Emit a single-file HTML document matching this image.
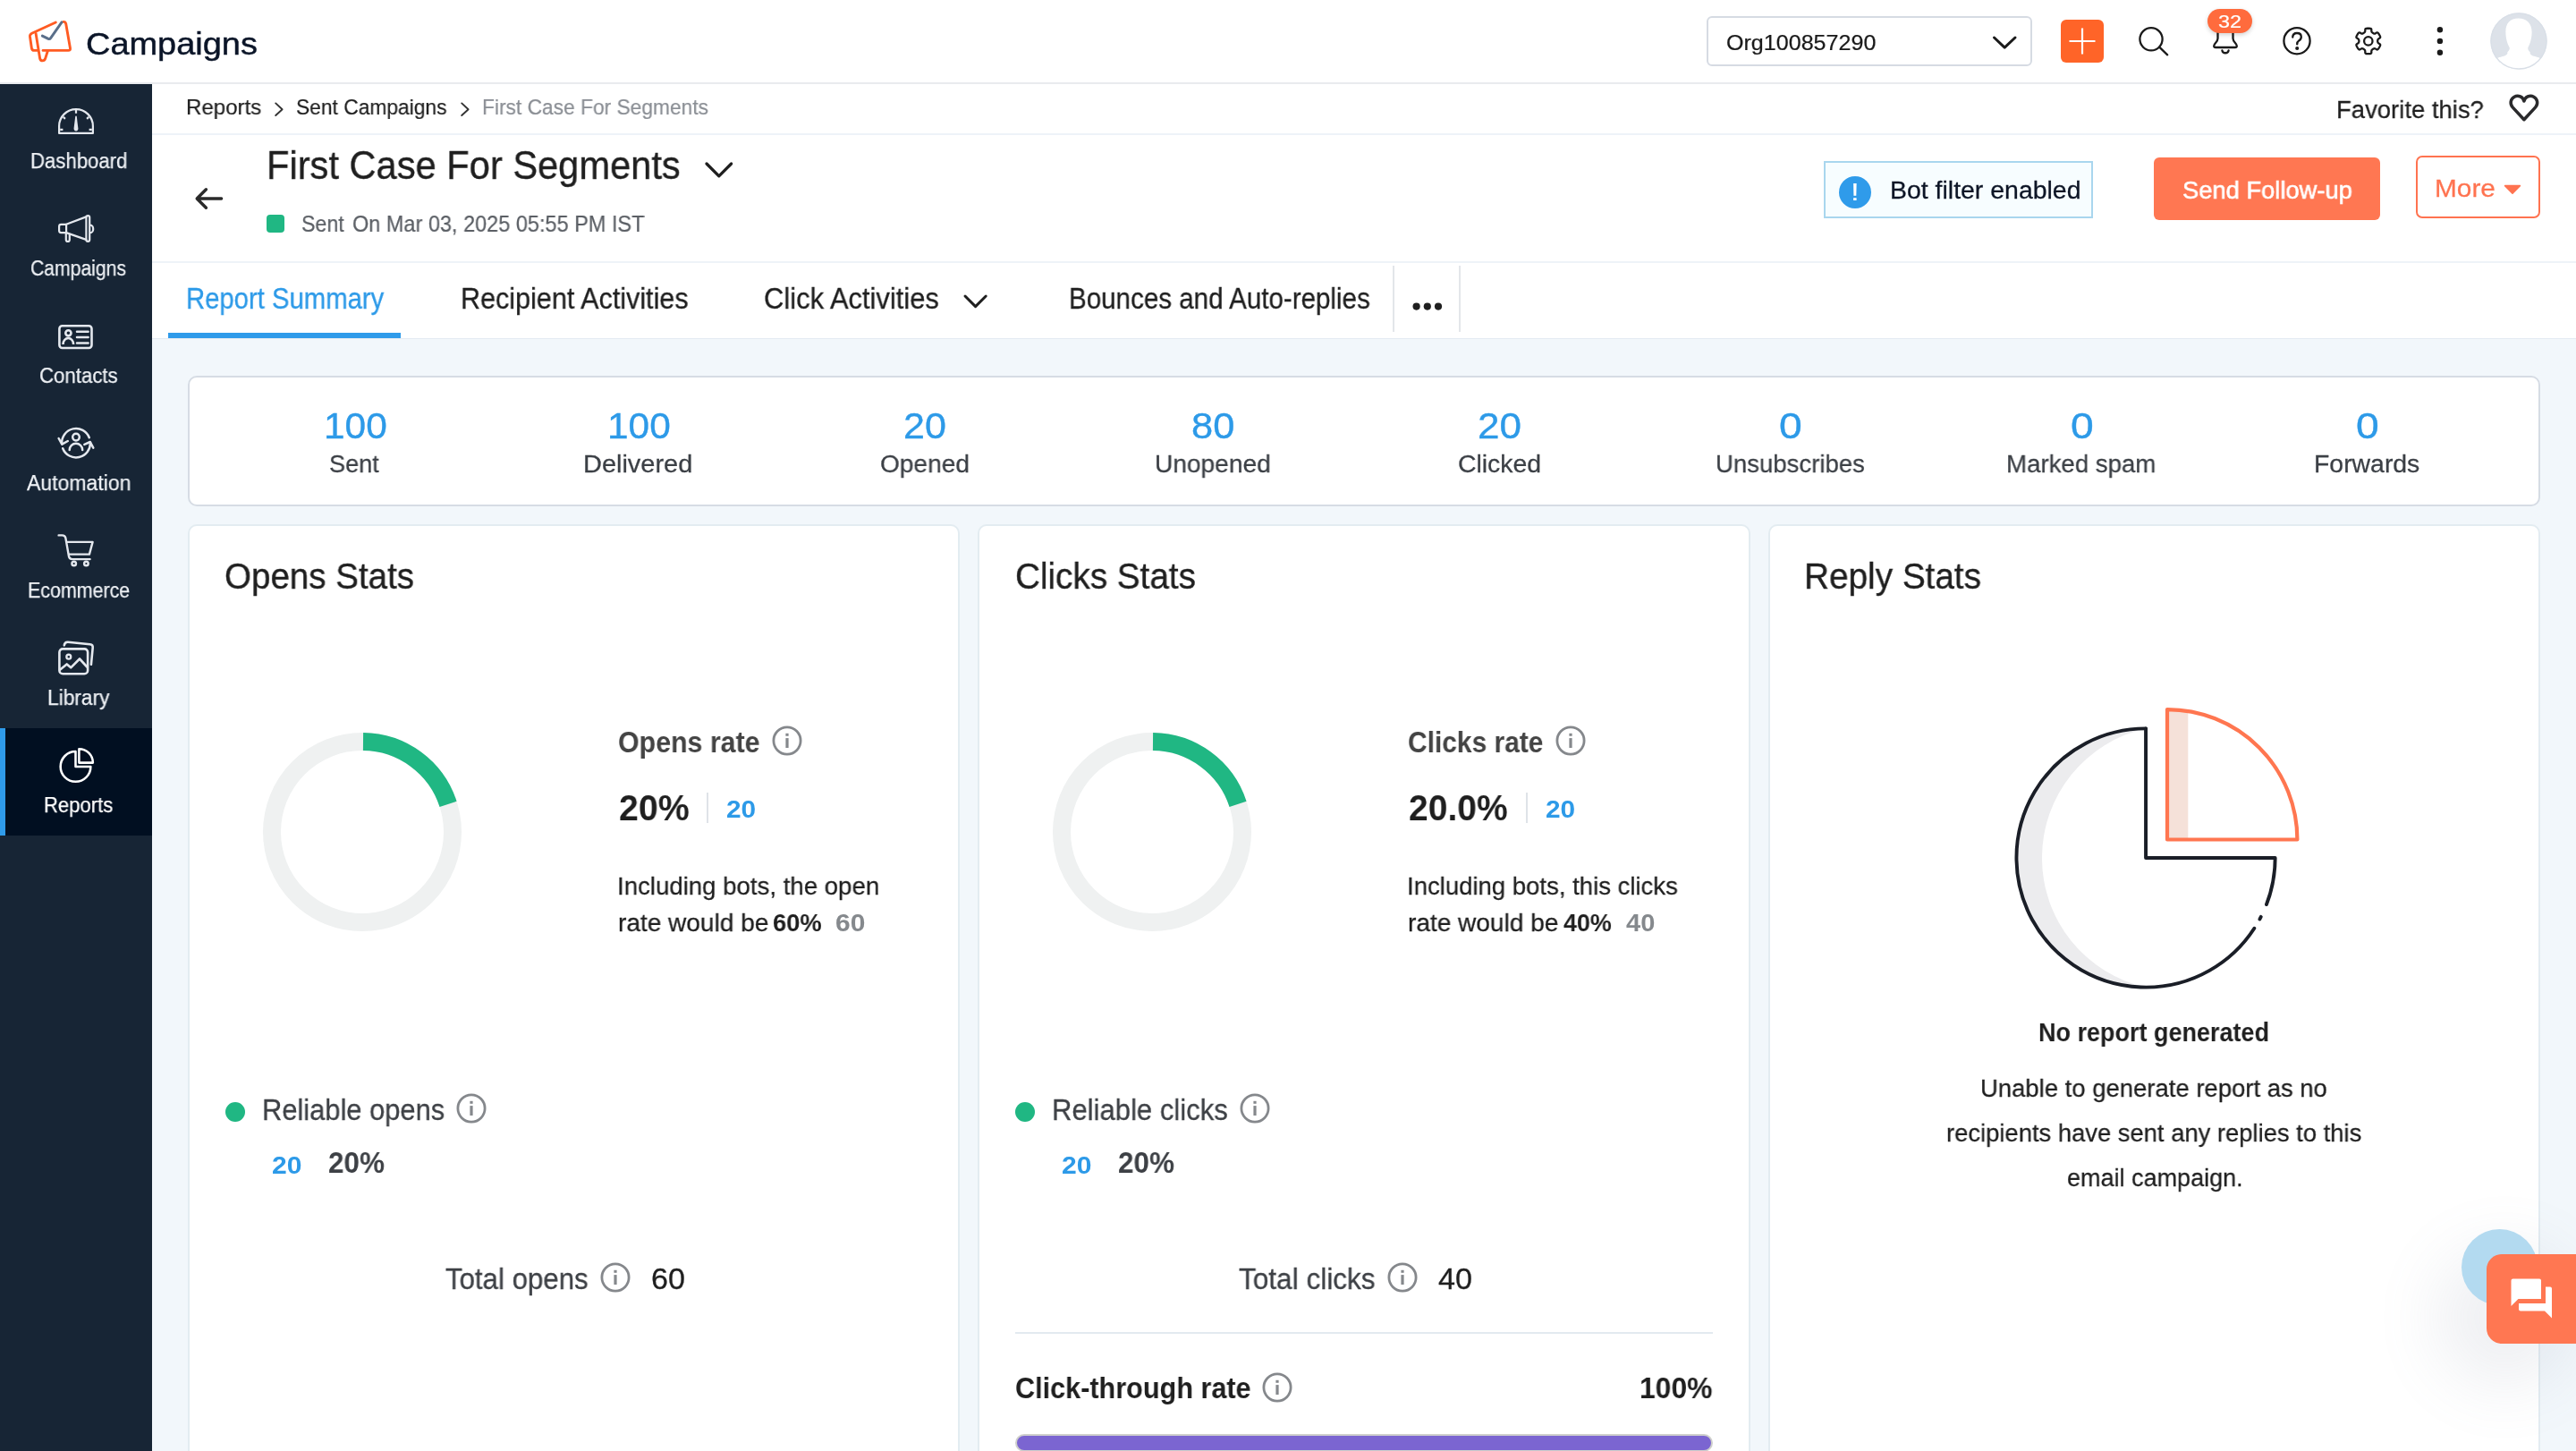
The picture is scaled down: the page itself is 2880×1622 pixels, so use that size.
<!DOCTYPE html>
<html lang="en"><head><meta charset="utf-8"><title>Campaigns - First Case For Segments</title>
<style>
*{box-sizing:border-box;margin:0;padding:0}
html,body{width:2880px;height:1622px;overflow:hidden;background:#f2f7fb;font-family:"Liberation Sans",sans-serif}
.abs,.t,svg{position:absolute}
.t{white-space:nowrap;transform-origin:0 0;display:block;will-change:transform}
header{position:absolute;left:0;top:0;width:2880px;height:94px;background:#fff;border-bottom:2px solid #e9ebee}
nav,main{position:absolute;left:0;top:0}
.crumbs{left:170px;top:94px;width:2710px;height:57px;background:#fff;border-bottom:2px solid #eef3f8}
.titlebar{left:170px;top:151px;width:2710px;height:143px;background:#fff;border-bottom:2px solid #eef3f8}
.tabs{left:170px;top:294px;width:2710px;height:85px;background:#fff;border-bottom:1px solid #e4ebf2}
.card{background:#fff;border:2px solid #e3ecf1;border-radius:10px}
.summary{left:210px;top:420px;width:2630px;height:146px;border-color:#d6dce4}
.vline{width:2px;background:#e3e6ea}
</style></head>
<body>
<header>
<svg style="left:0;top:0" width="120" height="92" viewBox="0 0 120 92" fill="none" stroke-linecap="round" stroke-linejoin="round">
<path d="M62.3 25 L35.6 37.2 Q33.2 38.4 33.5 41 L35.4 54 Q35.8 56.4 38.2 56.4 L41.9 56.4" stroke="#ff5b22" stroke-width="2.9"/>
<path d="M40.1 37.5 L44.6 65.2 Q45.1 67.9 47.6 67.9 Q49.8 67.9 50.6 65.6 L53.4 56.7" stroke="#ff5b22" stroke-width="2.9"/>
<path d="M48 56.4 L76.4 56.4 Q78.9 56.4 78.5 53.9 L73.7 26.6 Q73.2 24.2 70.8 24.4" stroke="#ff5b22" stroke-width="2.9"/>
<path d="M47.3 40.1 L54 43.4 Q55.6 44.1 56.6 42.6 L69 24.9" stroke="#5a6f8a" stroke-width="2.9"/>
</svg>
<span class="t" style="left:95.9px;top:28.1px;font-size:35.2px;line-height:42px;color:#0b1528;transform:scaleX(1.0781);-webkit-text-stroke:0.45px #0b1528">Campaigns</span>
<div class="abs" style="left:1908px;top:18px;width:364px;height:56px;border:2px solid #d6dbe3;border-radius:6px;background:#fff"></div>
<span class="t" style="left:1929.6px;top:32.5px;font-size:24.5px;line-height:29px;color:#1a1a1a;transform:scaleX(1.0238);-webkit-text-stroke:0.22px #1a1a1a">Org100857290</span>
<svg style="left:2224px;top:36px" width="34" height="24" viewBox="0 0 34 24" fill="none"><path d="M5.5 6 L17.2 17.2 L29 6" stroke="#1a1a1a" stroke-width="3" stroke-linecap="round" stroke-linejoin="round"/></svg>
<div class="abs" style="left:2304px;top:22px;width:48px;height:48px;border-radius:6px;background:#ff6428"></div>
<svg style="left:2304px;top:22px" width="48" height="48" viewBox="0 0 48 48"><path d="M9.5 24 H38.5 M24 9.5 V38.5" stroke="#fff" stroke-width="2.2" fill="none"/></svg>
<svg style="left:2386px;top:26px" width="44" height="44" viewBox="0 0 44 44" fill="none" stroke="#1a1a1a" stroke-width="2.3" stroke-linecap="round"><circle cx="19" cy="17.8" r="12.6"/><path d="M28.2 26.6 L37.2 35.3"/></svg>
<svg style="left:2466px;top:26px" width="44" height="44" viewBox="0 0 44 44" fill="none" stroke="#1a1a1a" stroke-width="2.3" stroke-linecap="round" stroke-linejoin="round"><path d="M13.5 8 V17 C13.5 21 9.2 22.5 9.2 25.2 Q9.2 27 11.2 27 H32.8 Q34.8 27 34.8 25.2 C34.8 22.5 30.5 21 30.5 17 V8"/><path d="M18.4 30.4 A3.7 3.7 0 0 0 25.6 30.4"/></svg>
<div class="abs" style="left:2468px;top:10px;width:50px;height:27px;border-radius:14px;background:#ff6b3d;box-shadow:0 2px 5px rgba(0,0,0,.18)"></div>
<span class="t" style="left:2479.9px;top:11.2px;font-size:21.1px;line-height:25px;color:#fff;transform:scaleX(1.1097);-webkit-text-stroke:0.19px #fff">32</span>
<svg style="left:2546px;top:24px" width="44" height="44" viewBox="0 0 44 44" fill="none" stroke="#1a1a1a" stroke-width="2.3" stroke-linecap="round"><circle cx="22" cy="21.7" r="14.6"/><path d="M17.2 17.6 Q17.4 13 22 13 Q26.8 13 26.8 17.2 Q26.8 19.8 24.2 21.4 Q22.2 22.7 22.2 25.4"/><circle cx="22.2" cy="30" r="0.9" fill="#1a1a1a"/></svg>
<svg style="left:2626px;top:24px" width="44" height="44" viewBox="0 0 44 44" fill="none" stroke="#1a1a1a" stroke-width="2.3" stroke-linejoin="round"><path d="M17.16 12.57 Q18.35 11.88 18.32 10.47 L18.30 9.14 Q18.27 7.73 20.67 7.73 L22.93 7.73 Q25.33 7.73 25.30 9.14 L25.28 10.47 Q25.25 11.88 26.44 12.57 L27.56 13.21 Q28.75 13.90 29.96 13.17 L31.10 12.49 Q32.30 11.76 33.50 13.84 L34.63 15.80 Q35.83 17.88 34.60 18.56 L33.44 19.20 Q32.21 19.88 32.21 21.25 L32.21 22.55 Q32.21 23.92 33.44 24.60 L34.60 25.24 Q35.83 25.92 34.63 28.00 L33.50 29.96 Q32.30 32.04 31.10 31.31 L29.96 30.63 Q28.75 29.90 27.56 30.59 L26.44 31.23 Q25.25 31.92 25.28 33.33 L25.30 34.66 Q25.33 36.07 22.93 36.07 L20.67 36.07 Q18.27 36.07 18.30 34.66 L18.32 33.33 Q18.35 31.92 17.16 31.23 L16.04 30.59 Q14.85 29.90 13.64 30.63 L12.50 31.31 Q11.30 32.04 10.10 29.96 L8.97 28.00 Q7.77 25.92 9.00 25.24 L10.16 24.60 Q11.39 23.92 11.39 22.55 L11.39 21.25 Q11.39 19.88 10.16 19.20 L9.00 18.56 Q7.77 17.88 8.97 15.80 L10.10 13.84 Q11.30 11.76 12.50 12.49 L13.64 13.17 Q14.85 13.90 16.04 13.21 Z"/><circle cx="21.8" cy="21.9" r="4.7"/></svg>
<svg style="left:2716px;top:24px" width="24" height="44" viewBox="0 0 24 44" fill="#1a1a1a"><circle cx="11.9" cy="9.2" r="3.2"/><circle cx="11.9" cy="21.9" r="3.2"/><circle cx="11.9" cy="34.7" r="3.2"/></svg>
<svg style="left:2784px;top:14px" width="64" height="64" viewBox="0 0 64 64"><defs><clipPath id="av"><circle cx="32" cy="32" r="31.4"/></clipPath></defs><circle cx="32" cy="32" r="31.6" fill="#dde2e9"/><g clip-path="url(#av)" fill="#fff"><path d="M31.5 6.6 C41 6.6 47 12.6 46.6 22.6 C46.4 30 44.4 35.6 42.4 39 C41.6 41.2 43.4 43 44.8 44.6 C43.8 46.4 46.4 48 50 49 C53.4 50 55.6 50.6 57 51.6 L57 64 L7 64 L7 51.6 C8.4 50.6 10.6 50 14 49 C17.6 48 20.2 46.4 19.2 44.6 C20.6 43 22.4 41.2 21.6 39 C19.6 35.6 17.6 30 17.4 22.6 C17 12.6 22 6.6 31.5 6.6 Z"/></g><circle cx="32" cy="32" r="31" fill="none" stroke="#d9dfe7" stroke-width="1.4"/></svg>
</header>
<nav class="abs" style="left:0;top:0;width:170px;height:1622px;background:linear-gradient(#172535,#172535) 0 94px/170px 1528px no-repeat">
<div class="abs" style="left:0;top:814px;width:170px;height:120px;background:#010f21;border-left:6px solid #2f9bea"></div>
<svg style="left:55px;top:116px" width="60" height="40" viewBox="55 116 60 40" fill="none" stroke="#e4e8ee" stroke-width="2.4" stroke-linecap="round" stroke-linejoin="round"><path d="M66.1 148.9 V141 A18.9 18.9 0 0 1 103.9 141 V148.9 Z" stroke-width="2.2"/><path d="M84.3 129.8 H85.7 L87.4 143.6 Q87.5 146.4 85 146.4 Q82.5 146.4 82.6 143.6 Z" fill="#e4e8ee" stroke="none"/><path d="M85 122.6 V126.7 M67.2 144.8 H70.4 M102.8 144.8 H99.6 M70.8 130.8 L72.9 132.9 M99.2 130.8 L97.1 132.9" stroke-width="2.2" stroke-linecap="butt"/></svg>
<svg style="left:55px;top:235px" width="60" height="42" viewBox="55 235 60 42" fill="none" stroke="#e4e8ee" stroke-width="2.2" stroke-linecap="round" stroke-linejoin="round"><path d="M74.1 250.8 H68.4 Q66.1 250.8 66.1 253.1 V257.8 Q66.1 260.1 68.4 260.1 H74.1 Z"/><path d="M74.1 250.8 L96.3 242.4 M74.1 260.1 L96.3 267.9"/><rect x="96.4" y="241.1" width="3.8" height="28.8" rx="1.9"/><path d="M101 251.6 A3.2 4.3 0 0 1 101 260.2"/><path d="M73.8 260.4 V267.9 A2 2 0 0 0 77.8 267.9 V261.8"/></svg>
<svg style="left:55px;top:358px" width="60" height="38" viewBox="55 358 60 38" fill="none" stroke="#e4e8ee" stroke-width="2.6" stroke-linecap="round" stroke-linejoin="round"><rect x="66.4" y="364.3" width="36.1" height="24.7" rx="3.2"/><circle cx="76.4" cy="372.3" r="3.1"/><path d="M70.5 384.9 A5.8 6.9 0 0 1 82.1 384.9" stroke-linecap="butt"/><path d="M86 370.8 H98.6 M86 377.1 H98.6 M86 383.4 H98.6" stroke-width="2.5"/></svg>
<svg style="left:55px;top:472px" width="60" height="46" viewBox="55 472 60 46" fill="none" stroke="#e4e8ee" stroke-width="2.5" stroke-linecap="round" stroke-linejoin="round"><path d="M99.8 489.2 A15.9 15.9 0 0 0 69.1 496"/><path d="M70.2 501.2 A15.9 15.9 0 0 0 100.9 494.4"/><path d="M65.6 490 L69.3 496.6 L75.8 493"/><path d="M94.3 496.9 L100.8 494 L104.3 500.7"/><circle cx="85" cy="488.6" r="3.8"/><path d="M77.7 503.1 A7.25 7.25 0 0 1 92.2 503.1"/></svg>
<svg style="left:55px;top:592px" width="60" height="46" viewBox="55 592 60 46" fill="none" stroke="#e4e8ee" stroke-width="2.4" stroke-linecap="round" stroke-linejoin="round"><path d="M65.6 598.4 H69.4 Q72.7 598.4 73.4 601.6 L77 622 Q77.6 625.1 80.8 625.1 H100.6"/><path d="M75 605.9 H103.6 L99.9 619.6 H77.2"/><circle cx="82.7" cy="630" r="2.3"/><circle cx="96.4" cy="630" r="2.3"/></svg>
<svg style="left:55px;top:711px" width="60" height="48" viewBox="55 711 60 48" fill="none" stroke="#e4e8ee" stroke-width="2.6" stroke-linecap="round" stroke-linejoin="round"><rect x="66.4" y="725.4" width="31.7" height="27.9" rx="3.8"/><path d="M71.8 721.4 Q72.3 717.4 76 717.7 L100.6 720.3 Q104.1 720.7 103.7 724.2 L101.9 742.8"/><circle cx="76.8" cy="734.2" r="2.45" stroke-width="2.3"/><path d="M67.3 748.6 L74.7 742.4 L79.2 746.3 L89 736.5 L97.3 745.5"/></svg>
<svg style="left:55px;top:830px" width="60" height="50" viewBox="55 830 60 50" fill="none" stroke="#fff" stroke-width="2.55" stroke-linecap="round" stroke-linejoin="round"><path d="M84.5 840.05 A16.85 16.85 0 1 0 101.35 856.9 H84.5 Z"/><path d="M88.4 837.15 A15.45 15.45 0 0 1 103.85 852.6 H88.4 Z"/></svg>
<span class="t" style="left:33.7px;top:165.7px;font-size:23.3px;line-height:28px;color:#eef1f5;transform:scaleX(0.9510);-webkit-text-stroke:0.25px #eef1f5">Dashboard</span>
<span class="t" style="left:34.4px;top:285.9px;font-size:23.3px;line-height:28px;color:#eef1f5;transform:scaleX(0.9080);-webkit-text-stroke:0.25px #eef1f5">Campaigns</span>
<span class="t" style="left:43.9px;top:405.6px;font-size:23.3px;line-height:28px;color:#eef1f5;transform:scaleX(0.9534);-webkit-text-stroke:0.25px #eef1f5">Contacts</span>
<span class="t" style="left:30.3px;top:525.7px;font-size:23.3px;line-height:28px;color:#eef1f5;transform:scaleX(0.9873);-webkit-text-stroke:0.25px #eef1f5">Automation</span>
<span class="t" style="left:30.8px;top:645.8px;font-size:23.3px;line-height:28px;color:#eef1f5;transform:scaleX(0.9185);-webkit-text-stroke:0.25px #eef1f5">Ecommerce</span>
<span class="t" style="left:52.5px;top:765.6px;font-size:23.3px;line-height:28px;color:#eef1f5;transform:scaleX(0.9758);-webkit-text-stroke:0.25px #eef1f5">Library</span>
<span class="t" style="left:49.2px;top:885.9px;font-size:23.3px;line-height:28px;color:#fff;transform:scaleX(0.9464);-webkit-text-stroke:0.25px #fff">Reports</span>
</nav>
<main>
<div class="abs crumbs"></div>
<span class="t" style="left:207.5px;top:105.4px;font-size:24.5px;line-height:29px;color:#1f1f1f;transform:scaleX(0.9820);-webkit-text-stroke:0.22px #1f1f1f">Reports</span>
<span class="t" style="left:331.4px;top:105.4px;font-size:24.5px;line-height:29px;color:#1f1f1f;transform:scaleX(0.9299);-webkit-text-stroke:0.22px #1f1f1f">Sent Campaigns</span>
<span class="t" style="left:539.4px;top:105.4px;font-size:24.5px;line-height:29px;color:#8a8e94;transform:scaleX(0.9291);-webkit-text-stroke:0.22px #8a8e94">First Case For Segments</span>
<svg style="left:305px;top:112px" width="16" height="20" viewBox="0 0 16 20" fill="none"><path d="M3.2 3.4 L10.6 10.2 L3.2 17" stroke="#333" stroke-width="1.9" stroke-linecap="round" stroke-linejoin="round"/></svg>
<svg style="left:513px;top:112px" width="16" height="20" viewBox="0 0 16 20" fill="none"><path d="M3.2 3.4 L10.6 10.2 L3.2 17" stroke="#333" stroke-width="1.9" stroke-linecap="round" stroke-linejoin="round"/></svg>
<span class="t" style="left:2611.6px;top:105.0px;font-size:28.4px;line-height:34px;color:#1f1f1f;transform:scaleX(0.9677);-webkit-text-stroke:0.26px #1f1f1f">Favorite this?</span>
<svg style="left:2800px;top:100px" width="44" height="40" viewBox="0 0 44 40" fill="none"><path d="M21.90 33.70 L9.10 19.90 A7.5 7.5 0 1 1 21.90 13.08 A7.5 7.5 0 1 1 34.70 19.90 Z" stroke="#2a2a2c" stroke-width="3.5" stroke-linejoin="round"/></svg>
<div class="abs titlebar"></div>
<svg style="left:212px;top:204px" width="44" height="36" viewBox="0 0 44 36" fill="none"><path d="M35.6 18 H9 M18.4 7.8 L8.2 18 L18.4 28.2" stroke="#2a2a2a" stroke-width="3.4" stroke-linecap="round" stroke-linejoin="round"/></svg>
<span class="t" style="left:298.0px;top:158.1px;font-size:44.7px;line-height:54px;color:#1f1f1f;transform:scaleX(0.9317);-webkit-text-stroke:0.4px #1f1f1f">First Case For Segments</span>
<svg style="left:782px;top:174px" width="44" height="32" viewBox="0 0 44 32" fill="none"><path d="M8 9 L21.8 22.8 L35.6 9" stroke="#1f1f1f" stroke-width="3.3" stroke-linecap="round" stroke-linejoin="round"/></svg>
<div class="abs" style="left:298px;top:240px;width:20px;height:20px;border-radius:4px;background:#20b783"></div>
<span class="t" style="left:337.4px;top:234.8px;font-size:24.9px;line-height:30px;color:#5c6066;transform:scaleX(0.9322);-webkit-text-stroke:0.22px #5c6066">Sent</span>
<span class="t" style="left:393.6px;top:234.8px;font-size:24.9px;line-height:30px;color:#5c6066;transform:scaleX(0.9438);-webkit-text-stroke:0.22px #5c6066">On Mar 03, 2025 05:55 PM IST</span>
<div class="abs" style="left:2039px;top:180px;width:301px;height:64px;border:2px solid #a9d6ee;background:#f7fdff"></div>
<div class="abs" style="left:2055.5px;top:196.5px;width:36px;height:36px;border-radius:50%;background:#2f9bea"></div>
<span class="t" style="left:2068.7px;top:198.3px;font-size:27.8px;line-height:33px;color:#fff;transform:scaleX(1.2544);-webkit-text-stroke:0.1px #fff">!</span>
<span class="t" style="left:2112.7px;top:194.6px;font-size:28.4px;line-height:34px;color:#0d1526;transform:scaleX(1.0019);-webkit-text-stroke:0.26px #0d1526">Bot filter enabled</span>
<div class="abs" style="left:2408px;top:176px;width:253px;height:70px;border-radius:6px;background:#ff7752"></div>
<span class="t" style="left:2439.5px;top:194.9px;font-size:28.4px;line-height:34px;color:#fff;transform:scaleX(0.9621);-webkit-text-stroke:0.6px #fff">Send Follow-up</span>
<div class="abs" style="left:2701px;top:174px;width:139px;height:70px;border:2px solid #ff7350;border-radius:7px;background:#fff"></div>
<span class="t" style="left:2722.4px;top:192.9px;font-size:28.4px;line-height:34px;color:#ff7350;transform:scaleX(1.0506);-webkit-text-stroke:0.26px #ff7350">More</span>
<svg style="left:2796px;top:203.2px" width="26" height="18" viewBox="0 0 26 18"><path d="M4.6 4.6 H21.4 L13 13.2 Z" fill="#ff7350" stroke="#ff7350" stroke-width="1.6" stroke-linejoin="round"/></svg>
<div class="abs tabs"></div>
<span class="t" style="left:207.8px;top:315.4px;font-size:32.5px;line-height:39px;color:#2d9ae8;transform:scaleX(0.9008);-webkit-text-stroke:0.29px #2d9ae8">Report Summary</span>
<div class="abs" style="left:188px;top:372px;width:260px;height:6px;background:#2f9bea"></div>
<span class="t" style="left:514.8px;top:315.4px;font-size:32.5px;line-height:39px;color:#1f1f1f;transform:scaleX(0.9396);-webkit-text-stroke:0.29px #1f1f1f">Recipient Activities</span>
<span class="t" style="left:854.4px;top:315.4px;font-size:32.5px;line-height:39px;color:#1f1f1f;transform:scaleX(0.9516);-webkit-text-stroke:0.29px #1f1f1f">Click Activities</span>
<svg style="left:1072px;top:322px" width="38" height="30" viewBox="0 0 38 30" fill="none"><path d="M7 9 L18.6 20.6 L30.2 9" stroke="#1f1f1f" stroke-width="3" stroke-linecap="round" stroke-linejoin="round"/></svg>
<span class="t" style="left:1195.1px;top:315.4px;font-size:32.5px;line-height:39px;color:#1f1f1f;transform:scaleX(0.9092);-webkit-text-stroke:0.29px #1f1f1f">Bounces and Auto-replies</span>
<div class="abs vline" style="left:1557px;top:297px;height:74px"></div>
<div class="abs vline" style="left:1631px;top:297px;height:74px"></div>
<svg style="left:1574.5px;top:332.7px" width="42" height="20" viewBox="0 0 42 20" fill="#1f1f1f"><circle cx="8.6" cy="9.6" r="4.1"/><circle cx="20.8" cy="9.6" r="4.1"/><circle cx="33" cy="9.6" r="4.1"/></svg>
<section class="abs card summary"></section>
<span class="t" style="left:361.8px;top:451.8px;font-size:40.8px;line-height:49px;color:#2d9ae8;transform:scaleX(1.0403);-webkit-text-stroke:0.37px #2d9ae8">100</span>
<span class="t" style="left:368.4px;top:501.2px;font-size:28.4px;line-height:34px;color:#3c4046;transform:scaleX(0.9542);-webkit-text-stroke:0.26px #3c4046">Sent</span>
<span class="t" style="left:678.7px;top:451.8px;font-size:40.8px;line-height:49px;color:#2d9ae8;transform:scaleX(1.0387);-webkit-text-stroke:0.37px #2d9ae8">100</span>
<span class="t" style="left:652.4px;top:501.2px;font-size:28.4px;line-height:34px;color:#3c4046;transform:scaleX(1.0192);-webkit-text-stroke:0.26px #3c4046">Delivered</span>
<span class="t" style="left:1010.2px;top:451.8px;font-size:40.8px;line-height:49px;color:#2d9ae8;transform:scaleX(1.0547);-webkit-text-stroke:0.37px #2d9ae8">20</span>
<span class="t" style="left:984.3px;top:501.2px;font-size:28.4px;line-height:34px;color:#3c4046;transform:scaleX(0.9890);-webkit-text-stroke:0.26px #3c4046">Opened</span>
<span class="t" style="left:1331.9px;top:451.8px;font-size:40.8px;line-height:49px;color:#2d9ae8;transform:scaleX(1.0637);-webkit-text-stroke:0.37px #2d9ae8">80</span>
<span class="t" style="left:1290.6px;top:501.2px;font-size:28.4px;line-height:34px;color:#3c4046;transform:scaleX(0.9901);-webkit-text-stroke:0.26px #3c4046">Unopened</span>
<span class="t" style="left:1651.8px;top:451.8px;font-size:40.8px;line-height:49px;color:#2d9ae8;transform:scaleX(1.0787);-webkit-text-stroke:0.37px #2d9ae8">20</span>
<span class="t" style="left:1629.6px;top:501.2px;font-size:28.4px;line-height:34px;color:#3c4046;transform:scaleX(0.9957);-webkit-text-stroke:0.26px #3c4046">Clicked</span>
<span class="t" style="left:1988.5px;top:451.8px;font-size:40.8px;line-height:49px;color:#2d9ae8;transform:scaleX(1.1336);-webkit-text-stroke:0.37px #2d9ae8">0</span>
<span class="t" style="left:1917.5px;top:501.2px;font-size:28.4px;line-height:34px;color:#3c4046;transform:scaleX(0.9703);-webkit-text-stroke:0.26px #3c4046">Unsubscribes</span>
<span class="t" style="left:2314.6px;top:451.8px;font-size:40.8px;line-height:49px;color:#2d9ae8;transform:scaleX(1.1336);-webkit-text-stroke:0.37px #2d9ae8">0</span>
<span class="t" style="left:2243.4px;top:501.2px;font-size:28.4px;line-height:34px;color:#3c4046;transform:scaleX(0.9731);-webkit-text-stroke:0.26px #3c4046">Marked spam</span>
<span class="t" style="left:2634.2px;top:451.8px;font-size:40.8px;line-height:49px;color:#2d9ae8;transform:scaleX(1.1336);-webkit-text-stroke:0.37px #2d9ae8">0</span>
<span class="t" style="left:2587.3px;top:501.2px;font-size:28.4px;line-height:34px;color:#3c4046;transform:scaleX(0.9966);-webkit-text-stroke:0.26px #3c4046">Forwards</span>
<section class="abs card" style="left:210px;top:586px;width:863px;height:1060px"></section>
<section class="abs card" style="left:1093px;top:586px;width:864px;height:1060px"></section>
<section class="abs card" style="left:1977px;top:586px;width:863px;height:1060px"></section>
<span class="t" style="left:251.3px;top:619.7px;font-size:40.8px;line-height:49px;color:#1f1f1f;transform:scaleX(0.9447);-webkit-text-stroke:0.37px #1f1f1f">Opens Stats</span>
<span class="t" style="left:1134.7px;top:619.7px;font-size:40.8px;line-height:49px;color:#1f1f1f;transform:scaleX(0.9475);-webkit-text-stroke:0.37px #1f1f1f">Clicks Stats</span>
<span class="t" style="left:2016.9px;top:619.7px;font-size:40.8px;line-height:49px;color:#1f1f1f;transform:scaleX(0.9490);-webkit-text-stroke:0.37px #1f1f1f">Reply Stats</span>
<svg style="left:290px;top:814.5px" width="230" height="230" viewBox="290 814.5 230 230" fill="none"><circle cx="405" cy="929.5" r="101" stroke="#eff1f1" stroke-width="20"/><path d="M406 828.5 A101 101 0 0 1 501.06 898.29" stroke="#20b783" stroke-width="20"/></svg>
<span class="t" style="left:691.4px;top:811.2px;font-size:32.5px;line-height:39px;color:#444;transform:scaleX(0.9332);font-weight:700">Opens rate</span>
<svg style="left:861.6px;top:810.2px" width="36" height="36" viewBox="-18 -18 36 36" fill="none"><circle cx="0" cy="0" r="15.1" stroke="#85888c" stroke-width="2.8"/><rect x="-1.6" y="-8.2" width="3.2" height="3" fill="#85888c"/><rect x="-1.6" y="-2.9" width="3.2" height="10.9" fill="#85888c"/></svg>
<span class="t" style="left:691.5px;top:878.9px;font-size:40.8px;line-height:49px;color:#1f1f1f;transform:scaleX(0.9628);font-weight:700">20%</span>
<div class="abs" style="left:790px;top:886px;width:2px;height:34px;background:#dfe3e8"></div>
<span class="t" style="left:812.0px;top:886.8px;font-size:28.4px;line-height:34px;color:#2d9ae8;transform:scaleX(1.0496);font-weight:700">20</span>
<span class="t" style="left:690.3px;top:972.8px;font-size:28.4px;line-height:34px;color:#1f1f1f;transform:scaleX(0.9724);-webkit-text-stroke:0.26px #1f1f1f">Including bots, the open</span>
<span class="t" style="left:691.0px;top:1013.7px;font-size:28.4px;line-height:34px;color:#1f1f1f;transform:scaleX(0.9873);-webkit-text-stroke:0.26px #1f1f1f">rate would be</span>
<span class="t" style="left:863.9px;top:1013.7px;font-size:28.4px;line-height:34px;color:#1f1f1f;transform:scaleX(0.9625);font-weight:700">60%</span>
<span class="t" style="left:933.7px;top:1013.7px;font-size:28.4px;line-height:34px;color:#85898d;transform:scaleX(1.0555);font-weight:700">60</span>
<div class="abs" style="left:251.8px;top:1231.8px;width:22.4px;height:22.4px;border-radius:50%;background:#20b783"></div>
<span class="t" style="left:293.1px;top:1221.9px;font-size:32.5px;line-height:39px;color:#3d4045;transform:scaleX(0.9496);-webkit-text-stroke:0.29px #3d4045">Reliable opens</span>
<svg style="left:508.79999999999995px;top:1221.4px" width="36" height="36" viewBox="-18 -18 36 36" fill="none"><circle cx="0" cy="0" r="15.1" stroke="#85888c" stroke-width="2.8"/><rect x="-1.6" y="-8.2" width="3.2" height="3" fill="#85888c"/><rect x="-1.6" y="-2.9" width="3.2" height="10.9" fill="#85888c"/></svg>
<span class="t" style="left:303.9px;top:1284.9px;font-size:28.4px;line-height:34px;color:#2d9ae8;transform:scaleX(1.0597);font-weight:700">20</span>
<span class="t" style="left:366.6px;top:1280.9px;font-size:32.5px;line-height:39px;color:#3d4045;transform:scaleX(0.9666);font-weight:700">20%</span>
<span class="t" style="left:498.1px;top:1410.5px;font-size:32.5px;line-height:39px;color:#3d4045;transform:scaleX(0.9602);-webkit-text-stroke:0.29px #3d4045">Total opens</span>
<svg style="left:670px;top:1410.4px" width="36" height="36" viewBox="-18 -18 36 36" fill="none"><circle cx="0" cy="0" r="15.1" stroke="#85888c" stroke-width="2.8"/><rect x="-1.6" y="-8.2" width="3.2" height="3" fill="#85888c"/><rect x="-1.6" y="-2.9" width="3.2" height="10.9" fill="#85888c"/></svg>
<span class="t" style="left:727.6px;top:1410.5px;font-size:32.5px;line-height:39px;color:#1f1f1f;transform:scaleX(1.0502);-webkit-text-stroke:0.29px #1f1f1f">60</span>
<svg style="left:1173px;top:814.5px" width="230" height="230" viewBox="1173 814.5 230 230" fill="none"><circle cx="1288" cy="929.5" r="101" stroke="#eff1f1" stroke-width="20"/><path d="M1289 828.5 A101 101 0 0 1 1384.06 898.29" stroke="#20b783" stroke-width="20"/></svg>
<span class="t" style="left:1574.4px;top:811.2px;font-size:32.5px;line-height:39px;color:#444;transform:scaleX(0.9209);font-weight:700">Clicks rate</span>
<svg style="left:1737.5px;top:810.2px" width="36" height="36" viewBox="-18 -18 36 36" fill="none"><circle cx="0" cy="0" r="15.1" stroke="#85888c" stroke-width="2.8"/><rect x="-1.6" y="-8.2" width="3.2" height="3" fill="#85888c"/><rect x="-1.6" y="-2.9" width="3.2" height="10.9" fill="#85888c"/></svg>
<span class="t" style="left:1574.5px;top:878.9px;font-size:40.8px;line-height:49px;color:#1f1f1f;transform:scaleX(0.9557);font-weight:700">20.0%</span>
<div class="abs" style="left:1706px;top:886px;width:2px;height:34px;background:#dfe3e8"></div>
<span class="t" style="left:1727.8px;top:886.8px;font-size:28.4px;line-height:34px;color:#2d9ae8;transform:scaleX(1.0496);font-weight:700">20</span>
<span class="t" style="left:1573.3px;top:972.8px;font-size:28.4px;line-height:34px;color:#1f1f1f;transform:scaleX(0.9693);-webkit-text-stroke:0.26px #1f1f1f">Including bots, this clicks</span>
<span class="t" style="left:1574.0px;top:1013.7px;font-size:28.4px;line-height:34px;color:#1f1f1f;transform:scaleX(0.9873);-webkit-text-stroke:0.26px #1f1f1f">rate would be</span>
<span class="t" style="left:1747.6px;top:1013.7px;font-size:28.4px;line-height:34px;color:#1f1f1f;transform:scaleX(0.9473);font-weight:700">40%</span>
<span class="t" style="left:1817.5px;top:1013.7px;font-size:28.4px;line-height:34px;color:#85898d;transform:scaleX(1.0222);font-weight:700">40</span>
<div class="abs" style="left:1134.8px;top:1231.8px;width:22.4px;height:22.4px;border-radius:50%;background:#20b783"></div>
<span class="t" style="left:1176.1px;top:1221.9px;font-size:32.5px;line-height:39px;color:#3d4045;transform:scaleX(0.9552);-webkit-text-stroke:0.29px #3d4045">Reliable clicks</span>
<svg style="left:1385.4px;top:1221.4px" width="36" height="36" viewBox="-18 -18 36 36" fill="none"><circle cx="0" cy="0" r="15.1" stroke="#85888c" stroke-width="2.8"/><rect x="-1.6" y="-8.2" width="3.2" height="3" fill="#85888c"/><rect x="-1.6" y="-2.9" width="3.2" height="10.9" fill="#85888c"/></svg>
<span class="t" style="left:1186.9px;top:1284.9px;font-size:28.4px;line-height:34px;color:#2d9ae8;transform:scaleX(1.0597);font-weight:700">20</span>
<span class="t" style="left:1249.6px;top:1280.9px;font-size:32.5px;line-height:39px;color:#3d4045;transform:scaleX(0.9666);font-weight:700">20%</span>
<span class="t" style="left:1385.1px;top:1410.5px;font-size:32.5px;line-height:39px;color:#3d4045;transform:scaleX(0.9714);-webkit-text-stroke:0.29px #3d4045">Total clicks</span>
<svg style="left:1550px;top:1410.4px" width="36" height="36" viewBox="-18 -18 36 36" fill="none"><circle cx="0" cy="0" r="15.1" stroke="#85888c" stroke-width="2.8"/><rect x="-1.6" y="-8.2" width="3.2" height="3" fill="#85888c"/><rect x="-1.6" y="-2.9" width="3.2" height="10.9" fill="#85888c"/></svg>
<span class="t" style="left:1607.5px;top:1410.5px;font-size:32.5px;line-height:39px;color:#1f1f1f;transform:scaleX(1.0520);-webkit-text-stroke:0.29px #1f1f1f">40</span>
<div class="abs" style="left:1135px;top:1489px;width:780px;height:2px;background:#e3eaf0"></div>
<span class="t" style="left:1134.7px;top:1532.8px;font-size:32.5px;line-height:39px;color:#1f1f1f;transform:scaleX(0.9417);font-weight:700">Click-through rate</span>
<svg style="left:1410.2px;top:1532.5px" width="36" height="36" viewBox="-18 -18 36 36" fill="none"><circle cx="0" cy="0" r="15.1" stroke="#85888c" stroke-width="2.8"/><rect x="-1.6" y="-8.2" width="3.2" height="3" fill="#85888c"/><rect x="-1.6" y="-2.9" width="3.2" height="10.9" fill="#85888c"/></svg>
<span class="t" style="left:1833.4px;top:1532.8px;font-size:32.5px;line-height:39px;color:#1f1f1f;transform:scaleX(0.9791);font-weight:700">100%</span>
<div class="abs" style="left:1135px;top:1603px;width:780px;height:20px;border-radius:10px;background:#7b65d1;border:2px solid #cfd0cc"></div>
<svg style="left:2230px;top:770px" width="360" height="350" viewBox="2230 770 360 350" fill="none" stroke-linecap="round" stroke-linejoin="round">
<path d="M2399.05 814.40 A144.6 144.6 0 0 0 2399.05 1103.60 A148.1 148.1 0 0 1 2399.05 814.40 Z" fill="#ececee"/>
<path d="M2399.05 814.40 A144.6 144.6 0 1 0 2520.32 1037.75" stroke="#1a1e27" stroke-width="3.9"/>
<path d="M2526.37 1027.55 A144.6 144.6 0 0 0 2527.77 1024.87" stroke="#1a1e27" stroke-width="3.9"/>
<path d="M2533.96 1011.06 A144.6 144.6 0 0 0 2543.65 959.00 H2399.05 V814.40" stroke="#1a1e27" stroke-width="3.9"/>
<rect x="2424" y="795" width="22.3" height="142" fill="#f5e1d9"/>
<path d="M2423 793.1 A145.4 145.4 0 0 1 2568.4 938.5 H2423 Z" stroke="#ff7650" stroke-width="4.2"/>
</svg>
<span class="t" style="left:2279.2px;top:1136.9px;font-size:28.8px;line-height:35px;color:#1f1f1f;transform:scaleX(0.9373);font-weight:700">No report generated</span>
<span class="t" style="left:2213.9px;top:1199.2px;font-size:28.4px;line-height:34px;color:#1f1f1f;transform:scaleX(0.9675);-webkit-text-stroke:0.26px #1f1f1f">Unable to generate report as no</span>
<span class="t" style="left:2175.5px;top:1249.2px;font-size:28.4px;line-height:34px;color:#1f1f1f;transform:scaleX(0.9645);-webkit-text-stroke:0.26px #1f1f1f">recipients have sent any replies to this</span>
<span class="t" style="left:2310.8px;top:1299.0px;font-size:28.4px;line-height:34px;color:#1f1f1f;transform:scaleX(0.9513);-webkit-text-stroke:0.26px #1f1f1f">email campaign.</span>
<div class="abs" style="left:2752px;top:1374px;width:85px;height:85px;border-radius:50%;background:#b3daf0;box-shadow:6px 56px 70px 36px rgba(120,135,160,.12)"></div>
<div class="abs" style="left:2780px;top:1402px;width:120px;height:100px;border-radius:17px;background:#ff7752"></div>
<svg style="left:2800px;top:1424px" width="60" height="56" viewBox="2800 1424 60 56" fill="#fff"><path d="M2809.5 1429.5 H2839 Q2841 1429.5 2841 1431.5 V1452 H2815.5 L2807.5 1460 V1431.5 Q2807.5 1429.5 2809.5 1429.5 Z"/><path d="M2846 1438.5 H2851 Q2853 1438.5 2853 1440.5 V1473.5 L2845 1465.5 H2818 Q2816 1465.5 2816 1463.5 V1457 H2846 Z"/></svg>
</main>
</body></html>
